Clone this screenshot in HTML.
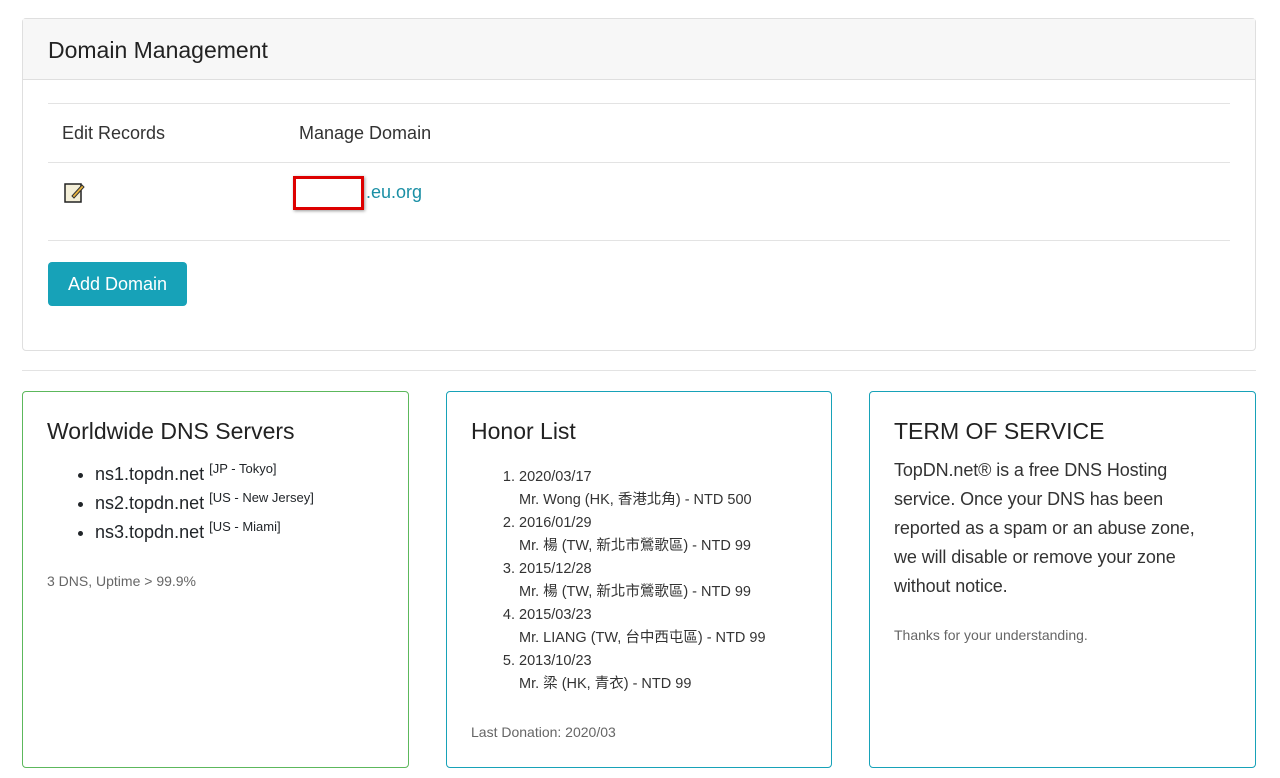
<!DOCTYPE html>
<html><head><meta charset="utf-8"><style>
*{box-sizing:border-box}
body{margin:0;background:#fff;font-family:"Liberation Sans","Noto Sans CJK TC",sans-serif;color:#212529;width:1280px;height:778px;overflow:hidden;position:relative}
.top{position:absolute;left:22px;top:18px;width:1234px;height:333px;border:1px solid #dfdfdf;border-radius:4px}
.hd{height:61px;background:#f7f7f7;border-bottom:1px solid #dfdfdf;padding:0 25px;font-size:23px;line-height:62px;color:#222}
.line{position:absolute;left:25px;right:25px;height:1px;background:#e3e3e3}
.t{position:absolute;font-size:18px;color:#333}
.btn{position:absolute;left:25px;top:243px;width:139px;height:44px;background:#17a2b8;color:#fff;border-radius:4px;font-size:18px;line-height:44px;text-align:center}
.hr{position:absolute;left:22px;top:370px;width:1234px;height:1px;background:#e3e3e3}
.card{position:absolute;top:391px;height:377px;border:1px solid #17a2b8;border-radius:4px;padding:26px 24px}
.card h3{margin:0 0 10px;font-weight:normal;font-size:23px;color:#222}
ul{margin:0;padding-left:48px;font-size:18px;line-height:29px}
sup{font-size:13px;line-height:0}
.sm{font-size:14px;color:#666}
ol{margin:0;padding-left:48px;font-size:14.5px;line-height:23px;color:#333}
</style></head><body>
<div class="top">
<div class="hd">Domain Management</div>
<div class="line" style="top:84px"></div>
<div class="t" style="left:39px;top:104px">Edit Records</div>
<div class="t" style="left:276px;top:104px">Manage Domain</div>
<div class="line" style="top:143px"></div>
<svg style="position:absolute;left:40px;top:162px" width="24" height="24" viewBox="0 0 24 24"><rect x="2" y="3" width="16" height="18" fill="#f4efd8" stroke="#222" stroke-width="1.5"/><path d="M9 15 L19 4 L21 6 L11 17 Z" fill="#e8b33c" stroke="#333"/></svg>
<div style="position:absolute;left:270px;top:157px;width:71px;height:34px;border:3px solid #d00;background:#fff;box-shadow:1px 1px 3px #999"></div>
<div class="t" style="left:343px;top:163px;color:#1a8fa5">.eu.org</div>
<div class="line" style="top:221px"></div>
<div class="btn">Add Domain</div>
</div>
<div class="hr"></div>
<div class="card" style="left:22px;width:387px;border-color:#5cb85c">
<h3 style="margin-bottom:15px">Worldwide DNS Servers</h3>
<ul><li>ns1.topdn.net <sup>[JP - Tokyo]</sup></li><li>ns2.topdn.net <sup>[US - New Jersey]</sup></li><li>ns3.topdn.net <sup>[US - Miami]</sup></li></ul>
<div class="sm" style="margin-top:26px">3 DNS, Uptime &gt; 99.9%</div>
</div>
<div class="card" style="left:446px;width:386px">
<h3 style="margin-bottom:21px">Honor List</h3>
<ol><li>2020/03/17<br>Mr. Wong (HK, 香港北角) - NTD 500</li><li>2016/01/29<br>Mr. 楊 (TW, 新北市鶯歌區) - NTD 99</li><li>2015/12/28<br>Mr. 楊 (TW, 新北市鶯歌區) - NTD 99</li><li>2015/03/23<br>Mr. LIANG (TW, 台中西屯區) - NTD 99</li><li>2013/10/23<br>Mr. 梁 (HK, 青衣) - NTD 99</li></ol>
<div class="sm" style="margin-top:28px">Last Donation: 2020/03</div>
</div>
<div class="card" style="left:869px;width:387px">
<h3 style="margin-bottom:11px">TERM OF SERVICE</h3>
<div style="font-size:18px;line-height:29px;color:#333;letter-spacing:-0.1px;padding-right:14px">TopDN.net® is a free DNS Hosting service. Once your DNS has been reported as a spam or an abuse zone, we will disable or remove your zone without notice.</div>
<div class="sm" style="margin-top:26px">Thanks for your understanding.</div>
</div>
</body></html>
